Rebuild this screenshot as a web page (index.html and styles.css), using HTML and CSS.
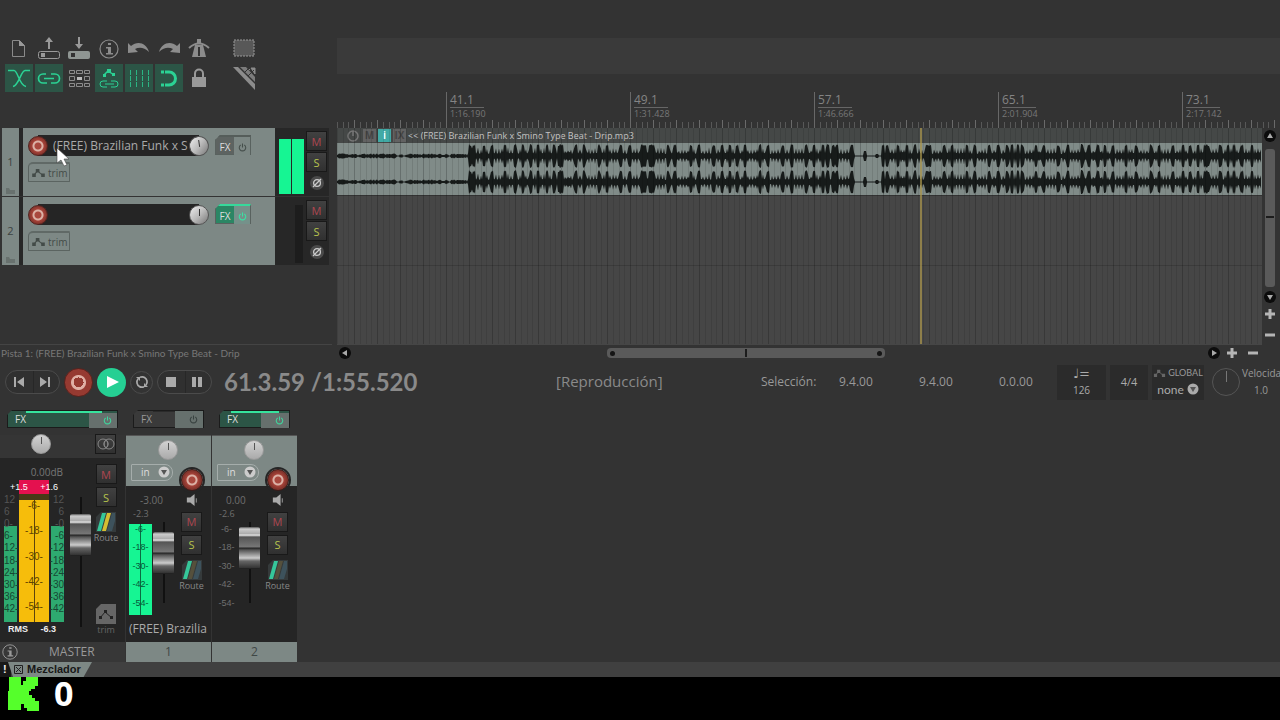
FILE: index.html
```html
<!DOCTYPE html>
<html lang="es">
<head>
<meta charset="utf-8">
<meta name="viewport" content="width=device-width, initial-scale=1">
<title>Mezclador</title>
<link rel="stylesheet" href="styles.css">
</head>
<body>
<svg class="defs" aria-hidden="true">
  <defs>
    <symbol id="env" viewBox="0 0 14 10"><path d="M2 8L6 3L9 6L12 8" fill="none" stroke="currentColor" stroke-width="1.2"/><path d="M0 6h4v4H0zM4 1h4v4H4zM10 6h4v4h-4z" fill="currentColor"/></symbol>
    <symbol id="power" viewBox="0 0 10 10"><path d="M3 2.2A3.6 3.6 0 1 0 7 2.2M5 .5V5" fill="none" stroke="currentColor" stroke-width="1.2"/></symbol>
    <symbol id="phase" viewBox="0 0 10 10"><circle cx="5" cy="5" r="3.4" fill="none" stroke="currentColor" stroke-width="1.3"/><path d="M1 9L9 1" stroke="currentColor" stroke-width="1.2"/></symbol>
    <symbol id="down" viewBox="0 0 12 12"><circle cx="6" cy="6" r="5.5" fill="currentColor"/><path d="M3 4h6L6 9z" fill="#555"/></symbol>
    <symbol id="route" viewBox="0 0 20 20"><path d="M5 0H20V20H0V5z" fill="#353a3b"/><path d="M6 1h4L5 19H1z" fill="#36c79a"/><path class="r2" d="M11 1h4l-5 18H6z"/><path class="r3" d="M16 1h3v8l-3 10h-5z"/></symbol>
    <symbol id="speaker" viewBox="0 0 14 14"><path d="M1 4h4l5-4v14L5 10H1z" fill="currentColor"/><path d="M12 5v5" stroke="currentColor"/></symbol>
    <symbol id="info" viewBox="0 0 20 20"><circle cx="10" cy="10" r="9" fill="none" stroke="currentColor" stroke-width="1.2"/><path d="M9 4h3v2H9zM7 8h5v6h2v1.500H7V14h2V9.500H7z" fill="currentColor"/></symbol>
    <symbol id="folder" viewBox="0 0 9 6"><path d="M0 0h3l1 2h5v4H0z" fill="currentColor"/></symbol>
    <symbol id="plus" viewBox="0 0 10 10"><path d="M3.500 0h3v3.500H10v3H6.500V10h-3V6.500H0v-3h3.500z" fill="currentColor"/></symbol>
    <symbol id="minus" viewBox="0 0 10 10"><path d="M0 3.500h10v3H0z" fill="currentColor"/></symbol>
    <symbol id="tri" viewBox="0 0 12 12"><circle cx="6" cy="6" r="6" fill="#0c0c0c"/><path d="M4 3l5 3-5 3z" fill="#aaa"/></symbol>
  </defs>
</svg>

<div class="app">
  <header class="top">
    <div class="tools">
      <div class="tool-row">
        <button class="tool" aria-label="Nuevo"><svg viewBox="0 0 28 28"><path d="M7.500 6.500h7l5 5v11h-12z" fill="none" stroke="#8a8a8a"/><path d="M14 6l6 6h-6z" fill="#999"/></svg></button>
        <button class="tool" aria-label="Abrir"><svg viewBox="0 0 28 28"><path d="M14 3l4 5h-3v7h-2V8h-3z" fill="#999"/><rect x="3.500" y="17.500" width="21" height="7" rx="2" fill="none" stroke="#999"/><path d="M6 19h4v4H6z" fill="#999"/></svg></button>
        <button class="tool" aria-label="Guardar"><svg viewBox="0 0 28 28"><path d="M14 15l4-5h-3V3h-2v7h-3z" fill="#999"/><rect x="3" y="17" width="22" height="8" rx="2" fill="#8f9693"/><path d="M6 19h4v4H6z" fill="#333"/></svg></button>
        <button class="tool gray" aria-label="Información"><svg class="pad4"><use href="#info"/></svg></button>
        <button class="tool" aria-label="Deshacer"><svg viewBox="0 0 28 28"><path d="M3 9l3 3c6-5 15-4 18 6-5-5-10-5-14-3l3 3-10 1z" fill="#8c8c8c"/></svg></button>
        <button class="tool" aria-label="Rehacer"><svg viewBox="0 0 28 28"><path d="M25 9l-3 3c-6-5-15-4-18 6 5-5 10-5 14-3l-3 3 10 1z" fill="#8c8c8c"/></svg></button>
        <button class="tool" aria-label="Metrónomo"><svg viewBox="0 0 28 28"><path d="M10 11h8l3 12H7z" fill="#8c8c8c"/><path d="M14 13v9" stroke="#333" stroke-width="2"/><path d="M12 5h4v5h-4z" fill="#8c8c8c"/><path d="M4 14Q14 5 24 14" fill="none" stroke="#8c8c8c" stroke-width="2"/></svg></button>
        <button class="tool apart" aria-label="Selección de área"><svg viewBox="0 0 28 28"><rect x="4" y="6" width="20" height="16" fill="#585858" stroke="#999" stroke-dasharray="2 1"/></svg></button>
      </div>
      <div class="tool-row">
        <button class="tool on" aria-label="Fundido cruzado"><svg viewBox="0 0 28 28"><path d="M3 6.500h6c4 0 5 15 12 16M25 6.500h-5c-4 0-6 15-12 16" fill="none" stroke="#2bd294" stroke-width="1.500"/></svg></button>
        <button class="tool on" aria-label="Agrupar"><svg viewBox="0 0 28 28"><path d="M11 10H8a4.500 4.500 0 0 0 0 9h4M16 10h4a4.500 4.500 0 0 1 0 9h-4M9 14.500h10" fill="none" stroke="#2bd294" stroke-width="1.700"/></svg></button>
        <button class="tool" aria-label="Matriz"><svg viewBox="0 0 28 28"><g fill="none" stroke="#8c8c8c"><path d="M4.500 6.500h5v3h-5zM11.500 6.500h6v3h-6zM19.500 6.500h5v3h-5zM4.500 12.500h5v4h-5zM19.500 12.500h5v4h-5zM4.500 19.500h5v3h-5zM11.500 19.500h6v3h-6zM19.500 19.500h5v3h-5z"/></g><path d="M12 13h5v3h-5z" fill="#bbb"/></svg></button>
        <button class="tool on" aria-label="Envolventes"><svg viewBox="0 0 28 28"><path d="M9 11l4-4 6 4" fill="none" stroke="#2bd294" stroke-width="1.500"/><path d="M8 10h3v3H8zM12 5h4v4h-4zM17 9h3v3h-3z" fill="#2bd294"/><path d="M12 17H8a3 3 0 0 0 0 6h4M16 17h4a3 3 0 0 1 0 6h-4M10 20h9" fill="none" stroke="#2bd294"/></svg></button>
        <button class="tool on" aria-label="Rejilla"><svg viewBox="0 0 28 28"><path d="M5.500 6v17M11.500 6v17M17.500 6v17M23.500 6v17" stroke="#2bb583" stroke-dasharray="5 1"/></svg></button>
        <button class="tool on" aria-label="Ajuste"><svg viewBox="0 0 28 28"><path d="M6 8h8a6 6 0 0 1 0 13H6" fill="none" stroke="#2bd294" stroke-width="3"/><path d="M9.500 5v20" stroke="#2c5546"/></svg></button>
        <button class="tool" aria-label="Bloquear"><svg viewBox="0 0 28 28"><path d="M7 13h14v10H7z" fill="#999"/><path d="M10 13V9.500a4 4 0 0 1 8 0V13" fill="none" stroke="#999" stroke-width="2"/></svg></button>
        <button class="tool apart" aria-label="Lápiz"><svg viewBox="0 0 28 28"><path d="M3 3h5l17 17v6z" fill="#8c8c8c"/><path d="M10 3h6l9 10v5z" fill="#7c7c7c"/><path d="M18 4l2 2M21 4h4v6z" fill="#8c8c8c" stroke="#8c8c8c"/><path d="M14 9l5-5M18 12l6-6" stroke="#333" stroke-width="1"/></svg></button>
      </div>
    </div>
    <div class="timeline">
      <div class="region-lane"></div>
      <div class="ruler">
        <div class="mark"><b>41.1</b><small>1:16.190</small></div>
        <div class="mark"><b>49.1</b><small>1:31.428</small></div>
        <div class="mark"><b>57.1</b><small>1:46.666</small></div>
        <div class="mark"><b>65.1</b><small>2:01.904</small></div>
        <div class="mark"><b>73.1</b><small>2:17.142</small></div>
      </div>
    </div>
  </header>

  <main class="workspace">
    <section class="tracks" aria-label="Pistas">
      <article class="track">
        <div class="num"><span>1</span><svg><use href="#folder"/></svg></div>
        <div class="panel">
          <div class="line">
            <div class="namebox"><button class="rec" aria-label="Grabar pista 1"></button><input class="name" aria-label="Nombre de pista 1" value="(FREE) Brazilian Funk x S"><button class="knob tilt" aria-label="Volumen 1"></button></div>
            <button class="fx"><span>FX</span><i><svg><use href="#power"/></svg></i></button>
          </div>
          <button class="trim"><svg><use href="#env"/></svg>trim</button>
        </div>
        <div class="vu live"><i></i><i></i></div>
        <div class="ms"><button class="sq m">M</button><button class="sq s">S</button><button class="ph" aria-label="Fase 1"><svg><use href="#phase"/></svg></button></div>
      </article>
      <article class="track">
        <div class="num"><span>2</span><svg><use href="#folder"/></svg></div>
        <div class="panel">
          <div class="line">
            <div class="namebox"><button class="rec" aria-label="Grabar pista 2"></button><input class="name" aria-label="Nombre de pista 2" value=""><button class="knob" aria-label="Volumen 2"></button></div>
            <button class="fx active"><span>FX</span><i><svg><use href="#power"/></svg></i></button>
          </div>
          <button class="trim"><svg><use href="#env"/></svg>trim</button>
        </div>
        <div class="vu idle"><i></i></div>
        <div class="ms"><button class="sq m">M</button><button class="sq s">S</button><button class="ph" aria-label="Fase 2"><svg><use href="#phase"/></svg></button></div>
      </article>
      <svg class="cursor" viewBox="0 0 14 20"><path d="M1 1v15l4-3 3 6 3-1-3-6h5z" fill="#fff" stroke="#444" stroke-width=".6"/></svg>
    </section>

    <section class="arrange" aria-label="Arreglo">
      <div class="item-head">
        <svg class="clock" viewBox="0 0 12 12"><circle cx="6" cy="6" r="5" fill="none" stroke="#777" stroke-width="1.500"/><path d="M6 1v5" stroke="#777" stroke-width="1.500"/></svg>
        <span class="chip">M</span><span class="chip teal">i</span><span class="chip">IX</span>
        <span class="item-name">&lt;&lt; (FREE) Brazilian Funk x Smino Type Beat - Drip.mp3</span>
      </div>
      <div class="item"><svg class="wave" aria-label="Forma de onda"><path id="wave"/></svg></div>
      <div class="lane"></div>
      <div class="lane-rest"></div>
      <div class="playhead"></div>
    </section>

    <div class="vscroll">
      <button class="ic up" aria-label="Arriba"><svg><use href="#tri"/></svg></button>
      <div class="vthumb"></div>
      <button class="ic dn" aria-label="Abajo"><svg><use href="#tri"/></svg></button>
      <button class="ic zoom" aria-label="Ampliar vertical"><svg><use href="#plus"/></svg></button>
      <button class="ic zoom" aria-label="Reducir vertical"><svg><use href="#minus"/></svg></button>
    </div>
  </main>

  <div class="status">
    <span class="hint">Pista 1: (FREE) Brazilian Funk x Smino Type Beat - Drip</span>
    <div class="hscroll">
      <button class="ic lf" aria-label="Izquierda"><svg><use href="#tri"/></svg></button>
      <div class="htrack"><div class="hthumb"><i></i><b></b><i></i></div></div>
      <button class="ic" aria-label="Derecha"><svg><use href="#tri"/></svg></button>
      <button class="ic zoom" aria-label="Ampliar"><svg><use href="#plus"/></svg></button>
      <button class="ic zoom" aria-label="Reducir"><svg><use href="#minus"/></svg></button>
    </div>
  </div>

  <section class="transport" aria-label="Transporte">
    <div class="buttons">
      <div class="pill">
        <button aria-label="Inicio"><svg viewBox="0 0 12 12"><path d="M1 1h2v10H1zM11 1v10L4 6z" fill="#aaa"/></svg></button>
        <button aria-label="Final"><svg viewBox="0 0 12 12"><path d="M9 1h2v10H9zM1 1v10l7-5z" fill="#aaa"/></svg></button>
      </div>
      <button class="bigrec" aria-label="Grabar"></button>
      <button class="play" aria-label="Reproducir"><svg viewBox="0 0 12 14"><path d="M0 1l12 6-12 6z" fill="#fff"/></svg></button>
      <button class="loop" aria-label="Repetir"><svg viewBox="0 0 14 14"><path d="M4.500 11.500A5 5 0 0 1 3 4M9.500 2.500A5 5 0 0 1 11 10M5 2.300a5 5 0 0 1 5 .5M9 11.700a5 5 0 0 1-5-.5" fill="none" stroke="#aaa" stroke-width="1.700"/><path d="M1 2h4v4zM13 12H9V8z" fill="#aaa"/></svg></button>
      <div class="pill">
        <button aria-label="Detener"><svg viewBox="0 0 12 12"><path d="M1 1h10v10H1z" fill="#aaa"/></svg></button>
        <button aria-label="Pausa"><svg viewBox="0 0 12 12"><path d="M1 1h4v10H1zM7 1h4v10H7z" fill="#aaa"/></svg></button>
      </div>
    </div>
    <output class="time">61.3.59 /1:55.520</output>
    <span class="state">[Reproducción]</span>
    <div class="selection"><span class="lab">Selección:</span><span>9.4.00</span><span>9.4.00</span><span>0.0.00</span></div>
    <div class="boxes">
      <div class="box tempo"><span class="note">♩=</span><span>126</span></div>
      <div class="box sig">4/4</div>
      <div class="box global"><span class="cap"><svg><use href="#env"/></svg>GLOBAL</span><button class="none">none<svg><use href="#down"/></svg></button></div>
      <button class="rate" aria-label="Velocidad"></button>
      <div class="speed"><span>Velocidad</span><span class="ratio">1.0</span></div>
    </div>
  </section>

  <section class="mixer" aria-label="Mezclador">
    <div class="master">
      <div class="fxrow"><button class="mfx active"><span>FX</span><i><svg><use href="#power"/></svg></i></button></div>
      <div class="mhead"><button class="knob flat" aria-label="Balance"></button><button class="sq" aria-label="Mono/estéreo"><svg class="rings" viewBox="0 0 18 12"><g fill="none" stroke="#888"><circle cx="6" cy="6" r="5"/><circle cx="12" cy="6" r="5"/><ellipse cx="9" cy="6" rx="2" ry="3.500"/></g></svg></button></div>
      <div class="mbody">
        <div class="mmeter">
          <div class="db">0.00dB</div>
          <div class="peak"><span>+1.5</span><span>+1.6</span></div>
          <div class="bars">
            <div class="side l"><span>12</span><span>6</span><span>0-</span><span>6-</span><span>12-</span><span>18-</span><span>24-</span><span>30-</span><span>36-</span><span>42-</span></div>
            <div class="center"><span>-6-</span><span>-18-</span><span>-30-</span><span>-42-</span><span>-54-</span></div>
            <div class="side r"><span>12</span><span>6</span><span>-0</span><span>-6</span><span>-12</span><span>-18</span><span>-24</span><span>-30</span><span>-36</span><span>-42</span></div>
          </div>
          <div class="rms"><span>RMS</span><span>-6.3</span></div>
        </div>
        <input class="fader tall" type="range" min="0" max="100" value="81" aria-label="Volumen master">
        <div class="col">
          <button class="sq m">M</button><button class="sq s">S</button>
          <button class="rt lit"><svg><use href="#route"/></svg>Route</button>
          <button class="rt mtrim"><svg class="tb" viewBox="0 0 20 20"><path d="M5 0h15v20H0V5z" fill="#666"/><path d="M4 14l5-6 7 6" fill="none" stroke="#222"/><path d="M3 12h3v3H3zM8 6h3v3H8zM14 12h3v3h-3z" fill="#222"/></svg>trim</button>
        </div>
      </div>
      <div class="mfoot"><svg><use href="#info"/></svg><span>MASTER</span></div>
    </div>

    <div class="strip">
      <div class="fxrow"><button class="mfx"><span>FX</span><i><svg><use href="#power"/></svg></i></button></div>
      <div class="shead"><button class="knob flat" aria-label="Paneo 1"></button><button class="in">in<svg><use href="#down"/></svg></button></div>
      <div class="sbody">
        <div class="smeter live"><div class="vol">-3.00</div><div class="pk">-2.3</div><div class="sbar"><span>-6-</span><span>-18-</span><span>-30-</span><span>-42-</span><span>-54-</span></div></div>
        <input class="fader" type="range" min="0" max="100" value="72" aria-label="Volumen pista 1">
        <div class="col"><button class="rec" aria-label="Armar 1"></button><svg class="spk"><use href="#speaker"/></svg><button class="sq m">M</button><button class="sq s">S</button><button class="rt"><svg><use href="#route"/></svg>Route</button></div>
      </div>
      <div class="sname">(FREE) Brazilia</div>
      <div class="sfoot">1</div>
    </div>

    <div class="strip">
      <div class="fxrow"><button class="mfx active"><span>FX</span><i><svg><use href="#power"/></svg></i></button></div>
      <div class="shead"><button class="knob flat" aria-label="Paneo 2"></button><button class="in">in<svg><use href="#down"/></svg></button></div>
      <div class="sbody">
        <div class="smeter"><div class="vol">0.00</div><div class="pk">-2.6</div><div class="sbar"><span>-6-</span><span>-18-</span><span>-30-</span><span>-42-</span><span>-54-</span></div></div>
        <input class="fader" type="range" min="0" max="100" value="85" aria-label="Volumen pista 2">
        <div class="col"><button class="rec" aria-label="Armar 2"></button><svg class="spk"><use href="#speaker"/></svg><button class="sq m">M</button><button class="sq s">S</button><button class="rt"><svg><use href="#route"/></svg>Route</button></div>
      </div>
      <div class="sname"></div>
      <div class="sfoot">2</div>
    </div>
  </section>

  <nav class="docker"><span class="bang">!</span><button class="tab"><svg viewBox="0 0 9 9"><path d="M.5.5h8v8h-8zM2 2l5 5M7 2L2 7" fill="none" stroke="#222"/></svg>Mezclador</button></nav>

  <footer class="overlay">
    <svg class="logo" viewBox="0 0 32 34"><path d="M1 0h12v8h2V4h3V0h12v9h-3v3h-4v2h-2v4h3v3h3v3h4v10H19v-3h-3v-4h-3v6H0V14h1z" fill="#55ff2b"/></svg>
    <span>0</span>
  </footer>
</div>
<script src="app.js"></script>
</body>
</html>
```
FILE: styles.css
```css
* { box-sizing: border-box; }
body { margin: 0; background: #333; color: #999; font: 11px/14px "Open Sans", "Noto Sans", sans-serif; overflow: hidden; }
button { appearance: none; border: 0; padding: 0; margin: 0; background: none; color: inherit; font: inherit; }
svg { display: block; }
.defs { position: absolute; width: 0; height: 0; }
.app { display: flex; flex-direction: column; min-height: 100vh; }

/* Toolbar and ruler */
.top { display: grid; grid-template-columns: 337px 1fr; }
.tools { padding: 34px 0 0 5px; display: grid; gap: 2px; align-content: start; }
.tool-row { display: flex; gap: 2px; }
.tool { width: 28px; height: 28px; }
.tool svg { width: 28px; height: 28px; }
.tool .pad4 { width: 20px; height: 20px; margin: 5px 4px; }
.tool.on { background: #2c5546; }
.tool.apart { margin-left: 15px; }
.gray { color: #8c8c8c; }
.timeline { padding-top: 38px; min-width: 0; overflow: hidden; }
.region-lane { height: 36px; background: #3a3a3a; }
.ruler { display: flex; height: 54px; padding: 18px 0 0 109px;
  background:
    repeating-linear-gradient(90deg, #6a6a6a 0 1px, transparent 1px 23px) 17px 100% / 1150px 8px repeat-x,
    repeating-linear-gradient(90deg, transparent 0 6px, #585858 6px 7px, transparent 7px 12px, #585858 12px 13px, transparent 13px 17px, #585858 17px 18px, transparent 18px 23px) 17px 100% / 1150px 6px repeat-x; }
.mark { flex: none; width: 184px; border-left: 1px solid #686868; padding-left: 3px; display: flex; flex-direction: column; align-items: start; color: #848484; }
.mark b { font-weight: 400; font-size: 12px; line-height: 15px; width: 34px; border-bottom: 1px solid #666; }
.mark small { font-size: 9px; line-height: 12px; color: #777; }

/* Track panel */
.workspace { display: grid; grid-template-columns: 332px 1fr 18px; height: 217px; }
.tracks { position: relative; border-bottom: 1px solid #444; }
.track { display: grid; grid-template-columns: 21px 252px 29px 25px; height: 68px; margin: 0 0 1px 2px; background: #272727; width: 327px; }
.num { background: #7d8885; color: #3c4341; display: flex; flex-direction: column; align-items: center; padding-top: 27px; justify-content: space-between; width: 17px; }
.num svg { width: 9px; height: 6px; color: #68716e; margin-bottom: 2px; }
.panel { background: #7d8885; padding: 7px 0 0 5px; }
.line { display: flex; gap: 6px; }
.namebox { display: flex; align-items: center; width: 181px; height: 21px; background: linear-gradient(90deg, transparent 10px, #252525 10px 171px, transparent 171px); }
.name { flex: 1; min-width: 0; border: 0; padding: 0 0 0 5px; background: transparent; color: #aaa; font: 12px/20px "Open Sans", sans-serif; outline: 0; }
.rec { flex: none; width: 20px; height: 20px; border-radius: 50%; border: 1px solid #53231f; background: radial-gradient(circle, #a9483e 0 3px, #dbb1a6 4px 5px, #a54238 6px, #83342c 9px); }
.knob { flex: none; width: 20px; height: 20px; border-radius: 50%; background: linear-gradient(#333, #333) 50% 3px / 1px 7px no-repeat, linear-gradient(135deg, #eee, #bbb 50%, #777); border: 1px solid #555; }
.knob.tilt { transform: rotate(-8deg); }
.knob.flat { background: linear-gradient(#555, #555) 50% 2px / 1px 7px no-repeat, linear-gradient(#d2d2d2, #aaa); border-color: #999; }
.fx { display: grid; grid-template-columns: 18px 16px; width: 36px; height: 20px; font-size: 10px; line-height: 20px; color: #ddd; background: #5d6361; border: 1px solid #59625f; border-top: 2px solid #555d5a; clip-path: polygon(5px 0, 100% 0, 100% 100%, 0 100%, 0 5px); }
.fx i, .mfx i { display: grid; place-items: center; background: #7c8784; color: #454e4b; }
.fx i svg, .mfx i svg { width: 9px; height: 9px; }
.fx.active { background: #2b8664; border-top-color: #37d99b; }
.fx.active i { color: #3be2a4; background: #75918a; }
.trim { display: flex; align-items: center; gap: 3px; margin-top: 6px; padding-left: 3px; width: 42px; height: 20px; border: 1px solid #5b6461; border-top: 2px solid #606966; border-radius: 5px 1px 1px 1px; color: #434b48; font: 10px/16px "Open Sans", sans-serif; }
.trim svg { width: 13px; height: 9px; }
.vu { display: flex; gap: 1px; padding: 11px 0 2px 4px; }
.vu i { flex: none; width: 12px; }
.vu.live i { background: #16f593; }
.vu.idle { padding-left: 20px; padding-top: 8px; }
.vu.idle i { width: 8px; background: #1d1d1d; }
.ms { display: flex; flex-direction: column; align-items: center; gap: 1px; padding-top: 3px; }
.sq { width: 21px; height: 20px; background: linear-gradient(#414141, #303030); border: 1px solid #191919; font-size: 11px; line-height: 17px; display: grid; place-items: center; }
.m { color: #ae4650; }
.s { color: #b6c44d; }
.ph { width: 14px; height: 14px; border-radius: 50%; margin-top: 3px; background: #4a4a4a; color: #ccc; display: grid; place-items: center; }
.ph svg { width: 10px; height: 10px; }
.cursor { position: absolute; left: 56px; top: 19px; width: 14px; height: 20px; }

/* Arrange view */
.arrange { position: relative; overflow: hidden; margin-left: 5px; background: #464646; display: flex; flex-direction: column; }
.arrange::after { content: ""; position: absolute; inset: 0 0 1px; pointer-events: none;
  background: repeating-linear-gradient(90deg, rgba(0,0,0,.2) 0 1px, transparent 1px 6px, rgba(0,0,0,.1) 6px 7px, transparent 7px 12px, rgba(0,0,0,.1) 12px 13px, transparent 13px 17px, rgba(0,0,0,.1) 17px 18px, transparent 18px 23px) 17px 0 / 1150px 100%; }
.item-head { height: 15px; background: #454847; display: flex; align-items: center; gap: 2px; padding-left: 10px; }
.clock { width: 12px; height: 12px; margin-right: 2px; }
.chip { width: 13px; height: 13px; line-height: 13px; text-align: center; background: #626262; color: #454545; font-weight: 700; font-size: 10px; }
.chip.teal { background: #41aaa5; color: #e2ffff; }
.item-name { font: 9px/14px "Open Sans", sans-serif; color: #c4c4c4; white-space: nowrap; }
.item { height: 52px; background: #808b88; }
.wave { width: 100%; height: 52px; fill: #171b1a; }
.lane { height: 71px; border-top: 1px solid #333; border-bottom: 1px solid #3b3b3b; }
.lane-rest { flex: 1; }
.playhead { position: absolute; left: 583px; top: 0; bottom: 1px; width: 2px; background: rgba(172, 151, 76, .7); z-index: 1; }
.vscroll { display: flex; flex-direction: column; align-items: center; padding: 2px 2px 0 0; }
.ic { flex: none; width: 12px; height: 12px; color: #b5b5b5; display: grid; place-items: center; }
.ic svg { width: 12px; height: 12px; }
.ic.zoom svg { width: 10px; height: 10px; }
.ic.up svg { transform: rotate(-90deg); }
.ic.dn svg { transform: rotate(90deg); }
.ic.lf svg { transform: rotate(180deg); }
.vthumb { height: 138px; width: 10px; margin: 7px 0 4px; border-radius: 3px; background: linear-gradient(#1c1c1c, #1c1c1c) 50% 67px / 8px 2px no-repeat, #5a5a5a; }
.vscroll .zoom { margin-top: 5px; }
.vscroll .zoom + .zoom { margin-top: 9px; }

/* Status line */
.status { display: grid; grid-template-columns: 337px 1fr; height: 16px; align-items: center; }
.hint { font: 10px/15px Lato, sans-serif; color: #777; padding: 1px 0 0 1px; white-space: nowrap; }
.hscroll { display: flex; align-items: center; padding: 0 21px 0 2px; gap: 6px; }
.hscroll .zoom + .zoom { margin-left: 3px; }
.htrack { flex: 1; padding-left: 250px; }
.hthumb { width: 278px; height: 10px; border-radius: 4px; background: #5a5a5a; display: flex; align-items: center; justify-content: space-between; padding: 0 3px; }
.hthumb i { width: 5px; height: 5px; border-radius: 50%; background: #151515; }
.hthumb b { width: 2px; height: 8px; background: #1c1c1c; }

/* Transport */
.transport { display: flex; align-items: center; height: 42px; overflow: hidden; }
.buttons { display: flex; align-items: center; padding-left: 5px; gap: 4px; flex: none; }
.pill { display: grid; grid-template-columns: 1fr 1fr; width: 55px; height: 24px; border: 1px solid #4b4b4b; border-radius: 12px; background: #303030; }
.pill button { display: grid; place-items: center; }
.pill button + button { border-left: 1px solid #272727; padding-right: 2px; }
.pill svg { width: 12px; height: 12px; }
.bigrec { width: 29px; height: 29px; border-radius: 50%; background: radial-gradient(circle, #963a31 0 5px, #e0b0a5 5px 7px, #963a31 8px); border: 1px solid #5b221d; }
.play { width: 29px; height: 29px; border-radius: 50%; background: #25cf93; display: grid; place-items: center; }
.play svg { width: 12px; height: 14px; margin-left: 2px; }
.loop { width: 23px; height: 23px; border-radius: 50%; border: 1px solid #4b4b4b; display: grid; place-items: center; }
.loop svg { width: 14px; height: 14px; }
.time { margin-left: 12px; width: 332px; font: 700 24px/30px Lato, sans-serif; color: #8a8a8a; white-space: nowrap; flex: none; }
.state { font-size: 15px; line-height: 20px; color: #8a8a8a; padding-bottom: 2px; }
.selection { display: grid; grid-template-columns: 78px 80px 80px 58px; margin-left: auto; font-size: 12px; line-height: 16px; flex: none; }
.boxes { display: flex; align-items: center; gap: 4px; width: 223px; flex: none; }
.box { height: 35px; background: #2b2b2b; flex: none; text-align: center; color: #aaa; }
.tempo { width: 49px; display: grid; line-height: 17px; font-size: 10px; }
.note { font: 13px/17px "DejaVu Sans", sans-serif; }
.sig { width: 38px; line-height: 33px; }
.global { width: 52px; display: grid; }
.cap { display: flex; justify-content: center; align-items: center; gap: 2px; font: 9px/16px Lato, sans-serif; color: #999; }
.cap svg { width: 13px; height: 8px; color: #666; }
.none { display: flex; align-items: center; justify-content: center; gap: 3px; font: 12px/17px Lato, sans-serif; padding-bottom: 4px; }
.none svg { width: 12px; height: 12px; }
.rate { flex: none; width: 28px; height: 28px; margin-left: 4px; border: 1px solid #555; border-radius: 50%; background: linear-gradient(#777, #777) 50% 2px / 1px 11px no-repeat; }
.speed { display: grid; line-height: 17px; font-size: 10px; margin-left: -2px; }
.ratio { padding-left: 12px; }

/* Mixer */
.mixer { display: flex; gap: 1px; height: 259px; }
.fxrow { height: 32px; padding: 7px 7px 0; }
.mfx { display: grid; grid-template-columns: 1fr 28px; width: 100%; height: 18px; border: 1px solid #1b1b1b; background: linear-gradient(#2a2a2a, #2a2a2a) 60% 0 / 55% 1px no-repeat, #3a3a3a; font-size: 10px; line-height: 17px; text-align: left; padding-left: 7px; clip-path: polygon(5px 0, 100% 0, 100% 100%, 0 100%, 0 5px); }
.mfx i { background: #66706d; color: #394240; padding-left: 9px; }
.mfx.active { color: #ddd; background: linear-gradient(#36e39d, #36e39d) 55% 0 / 70% 2px no-repeat, #2c5546; }
.mfx.active i { color: #40d59d; margin-top: 2px; }
.master { width: 125px; display: flex; flex-direction: column; }
.mhead { height: 23px; display: flex; justify-content: space-between; align-items: center; padding: 0 9px 6px 31px; background: #353535; }
.rings { width: 18px; height: 12px; }
.mbody { flex: 1; background: #252525; display: grid; grid-template-columns: 66px 25px 34px; }
.mmeter { padding: 7px 2px 0 3px; font: 10px/12px "Liberation Sans", sans-serif; }
.db { text-align: right; font: 10px/14px "Open Sans", sans-serif; color: #777; padding-right: 1px; }
.peak { display: flex; justify-content: space-between; height: 14px; margin-top: 1px; padding: 0 6px 0 7px; font-size: 9px; line-height: 14px; color: #fff; background: linear-gradient(#e4114f, #e4114f) 16px 0 / 30px 14px no-repeat; }
.bars { display: grid; grid-template-columns: 13px 30px 13px; gap: 2px; height: 128px; padding-left: 1px; }
.side { display: flex; flex-direction: column; justify-content: space-between; background: linear-gradient(transparent 32px, #2eaa70 32px); color: #555; line-height: 12px; padding-bottom: 7px; white-space: nowrap; }
.side.l { align-items: start; }
.side.r { align-items: end; }
.side span:nth-child(n+4) { color: #174732; }
.center { display: flex; flex-direction: column; justify-content: space-between; align-items: center; padding: 6px 0 9px; background: linear-gradient(#5d430d, #5d430d) 50% 6px / 1px 122px no-repeat, linear-gradient(#473a17 6px, #f6bd0b 6px); color: #604400; }
.rms { display: flex; justify-content: space-between; font-size: 9px; line-height: 13px; font-weight: 700; color: #eee; padding: 1px 8px 0 5px; }
.fader { appearance: none; writing-mode: vertical-lr; direction: rtl; width: 21px; height: 81px; margin: 36px 0 0; background: linear-gradient(#111, #111) 50% 0 / 2px 100% no-repeat; }
.fader.tall { height: 130px; margin: 39px 0 0 4px; }
.fader::-webkit-slider-thumb { appearance: none; width: 21px; height: 42px; border-radius: 2px; border: 0; background: linear-gradient(#555, #ccc 2px, #aaa 7px, #eee 8px, #555 10px, #777 20px, #222 21px, #555 23px, #ccc 31px, #888 33px, #666 34px, #333 41px, #111); }
.col { display: flex; flex-direction: column; align-items: center; gap: 3px; padding-top: 6px; color: #888; }
.mbody .col { padding-right: 4px; }
.rt { display: flex; flex-direction: column; align-items: center; font-size: 9px; line-height: 12px; margin-top: 2px; }
.rt svg { width: 20px; height: 20px; }
.mtrim { margin-top: auto; padding-bottom: 6px; color: #666; }
.r2 { fill: var(--second, #55503c); }
.r3 { fill: #3d525c; }
.lit { --second: #d5bd31; }
.mfoot { height: 20px; display: flex; align-items: center; gap: 31px; padding-left: 2px; background: #373737; color: #999; font-size: 12px; line-height: 20px; }
.mfoot svg { width: 16px; height: 16px; }
.strip { width: 85px; display: flex; flex-direction: column; }
.shead { height: 52px; background: #7d8885; padding: 4px 0 0 5px; border-top: 1px solid #555; }
.shead .knob { display: block; margin-left: 27px; }
.in { display: flex; align-items: center; justify-content: space-between; width: 42px; height: 17px; margin-top: 4px; padding: 0 2px 0 9px; font-size: 10px; line-height: 14px; color: #ddd; border: 1px solid #a5adab; border-radius: 1px 8px 8px 1px; }
.in svg { width: 12px; height: 12px; color: #ccc; }
.sbody { display: grid; grid-template-columns: 27px 21px 35px; background: #252525; flex: 1; }
.smeter { padding: 7px 0 0 3px; color: #6f6f6f; white-space: nowrap; }
.vol { font-size: 10px; line-height: 14px; padding-left: 11px; }
.pk { font: 9px/14px "Open Sans", sans-serif; padding-left: 4px; }
.sbar { width: 23px; height: 91px; margin-top: 3px; display: flex; flex-direction: column; justify-content: space-between; align-items: center; padding-bottom: 7px; font: 9px/10px "Liberation Sans", sans-serif; }
.live .sbar { background: linear-gradient(#0a6c42, #0a6c42) 50% 0 / 1px 100% no-repeat, #16f593; color: #07583a; }
.sbody .col { padding: 0; margin-top: -17px; }
.sbody .rec { width: 22px; height: 22px; border: 1px solid #3b1b18; box-shadow: 0 0 0 2px #252525; }
.spk { width: 14px; height: 12px; margin-bottom: 3px; color: #aaa; }
.sname { height: 28px; background: #252525; color: #aaa; font-size: 12px; line-height: 27px; padding-left: 3px; white-space: nowrap; overflow: hidden; }
.sfoot { height: 20px; text-align: center; background: #7d8885; color: #3f4745; font-size: 12px; line-height: 20px; }

/* Docker tab and overlay */
.docker { display: flex; height: 15px; background: #404040; font: 700 11px/15px "Liberation Sans", sans-serif; }
.bang { width: 11px; padding-left: 3px; color: #eee; background: #181818; }
.tab { display: flex; align-items: center; gap: 4px; width: 84px; padding-left: 6px; margin-left: -3px; color: #171717; background: #7d8885; clip-path: polygon(0 0, 100% 0, 90% 100%, 5px 100%); }
.tab svg { width: 9px; height: 9px; }
.overlay { flex: 1; min-height: 43px; background: #000; display: flex; align-items: flex-start; gap: 14px; padding-left: 8px; color: #fff; font: 700 34px/32px "Open Sans", sans-serif; }
.logo { width: 32px; height: 34px; }
```
FILE: app.js
```js
// Peak positions of the clip, in pixels from its left edge.
const hits = [133,137,147,155,168,178,186,194,201,210,217,222,225,239,247,262,270,284,293,305,308,313,316,331,338,354,362,377,385,393,400,408,423,431,446,455,469,477,486,491,496,500,515,546,550,561,570,578,590,593,607,615,630,638,652,661,670,675,681,685,699,707,721,731,745,752,761,768,776,789,799,814,822,836,846,853,861,868,871,883,891,897,905,915];
const quiet = [[0, 20], [22, 59], [63, 65], [69, 111], [114, 129]];
let seed = 41;
const rnd = () => (seed = (seed * 16807) % 2147483647) / 2147483647;

function amp(x) {
  if (x < 131) return quiet.some(([a, b]) => x >= a && x <= b) ? 1 + rnd() * 1.5 : 0.5;
  if (x > 517 && x < 545) return Math.abs(x - 528) < 1.5 ? 5 : Math.abs(x - 540) < 1.5 ? 2 : 0.5;
  const d = Math.min(...hits.map(h => Math.abs(x - h)));
  const beat = x % 3 === 0 ? 3 + rnd() * 2 : 0;
  if (d <= 1) return 10 + rnd() * 2;
  return 2 + rnd() * 2 + beat;
}

const amps = Array.from({ length: 925 }, (_, x) => amp(x));
const channel = c =>
  'M' + amps.map((a, x) => `${x} ${(c - a).toFixed(1)}`).join('L') +
  'L' + amps.map((a, x) => `${x} ${(c + a).toFixed(1)}`).reverse().join('L') + 'Z';
document.getElementById('wave').setAttribute('d', channel(13) + channel(39));
```
